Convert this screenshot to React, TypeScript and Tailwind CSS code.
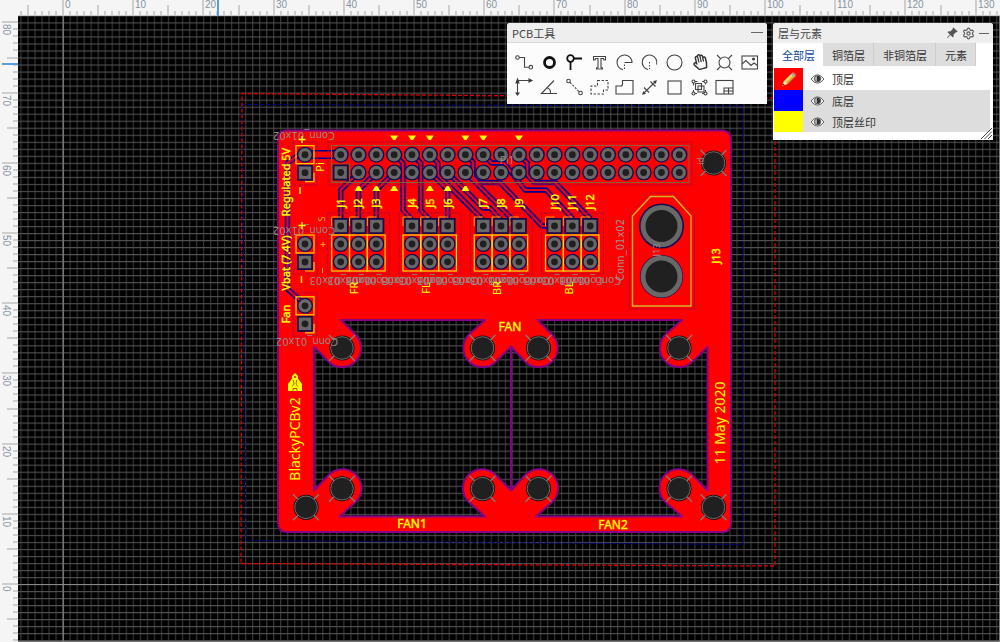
import React, { useEffect, useState } from "react";
import { Settings } from "lucide-react";
import { BsPinAngleFill } from "react-icons/bs";
import { FaRegHandPaper } from "react-icons/fa";

const UNIT = 7.02;
const ORIGIN_X = 63;
const ORIGIN_Y = 584;
const RULER_X = 18;
const RULER_Y = 16;

const range = (from: number, to: number) =>
  Array.from({ length: to - from + 1 }, (_, i) => from + i);

const tickLength = (n: number) => (n % 10 === 0 ? 16 : n % 5 === 0 ? 11 : 5);

function useWindowSize() {
  const read = () => ({ width: window.innerWidth, height: window.innerHeight });
  const [size, setSize] = useState(read);
  useEffect(() => {
    const update = () => setSize(read());
    window.addEventListener("resize", update);
    return () => window.removeEventListener("resize", update);
  }, []);
  return size;
}

function TopRuler() {
  const { width } = useWindowSize();
  return (
    <svg className="block h-full w-full" aria-label="X ruler">
      <g transform={`translate(${-RULER_X} 0)`}>
        {range(-6, Math.floor((width - ORIGIN_X) / UNIT)).map((n) => {
          const x = Math.round(ORIGIN_X + n * UNIT);
          return (
            <g key={n}>
              <rect x={x - 0.5} y={16 - tickLength(n)} width="1" height="16" fill="#a8a8a8" />
              {n % 10 === 0 && (
                <text x={x + 2} y="8" fontSize="10" fill="#8794a3" fontFamily="Liberation Sans, sans-serif">
                  {n}
                </text>
              )}
            </g>
          );
        })}
        <rect x={RULER_X} y="15" width={width} height="1" fill="#c4c8c8" />
        <rect x="217" y="0" width="2" height="16" fill="#5c9be0" />
      </g>
    </svg>
  );
}

function LeftRuler() {
  const { height } = useWindowSize();
  return (
    <svg className="block h-full w-full" aria-label="Y ruler">
      <g transform={`translate(0 ${-RULER_Y})`}>
        {range(-Math.max(0, Math.floor((height - ORIGIN_Y) / UNIT)), 80).map((n) => {
          const y = Math.round(ORIGIN_Y - n * UNIT);
          return (
            <g key={n}>
              <rect x={18 - tickLength(n)} y={y - 0.5} width="16" height="1" fill="#a8a8a8" />
              {n % 10 === 0 && (
                <text
                  transform={`translate(3 ${y + 2}) rotate(90)`}
                  fontSize="10"
                  fill="#8794a3"
                  fontFamily="Liberation Sans, sans-serif"
                >
                  {n}
                </text>
              )}
            </g>
          );
        })}
        <rect x="2" y="63" width="16" height="2" fill="#5c9be0" />
      </g>
    </svg>
  );
}

const col = (i: number) => 340.7 + i * 17.82;

const BOARD =
  "M287 130.5H722Q731 130.5 731 139.5V523Q731 532 722 532H287Q278 532 278 523V139.5Q278 130.5 287 130.5Z";
const LEFT_CUTOUT =
  "M341 320H485L469 334.5A19 19 0 1 0 496 361.5L511 346.5V490.5L496 475.3A19 19 0 1 0 469 502L485 516.5H339.5L355.5 502A19 19 0 1 0 328.5 475.3L314 490.5V346.5L328.5 361.5A19 19 0 1 0 355.5 334.5Z";
const RIGHT_CUTOUT =
  "M537.5 320H682L665.5 334.5A19 19 0 1 0 692.5 361.5L707.5 347V490.5L692.5 475.3A19 19 0 1 0 665.5 502L682 516.5H536L552 502A19 19 0 1 0 525 475.3L511 490.5V346.5L525 361.5A19 19 0 1 0 552 334.5Z";

const TRACES = [
  "M358.5 172.5L340.7 190V226",
  "M376.3 172.5L358.5 190V226",
  "M394.2 172.5L376.3 190V226",
  "M394.2 154.7L403 163V210L412 220",
  "M412 154.7L420.7 163V210L430 220",
  "M430 154.7L438 163V175L483 220",
  "M430 172.5L447.7 190V226",
  "M447.7 172.5L483 208H490L501 220",
  "M465.5 172.5L519 226",
  "M465.5 154.7L473 162V177L478 182.5H500L542 226H554",
  "M483.3 154.7L491.5 163H504L525 190H546L573 219",
  "M519 154.7L527.3 163V175L534 182.5H555L590.5 219",
  "M305 154.7H299L287.5 163V289L305 305",
];

const PADS = [0, 1, 2, 4, 5, 6, 8, 9, 10, 12, 13, 14];
const HOLES = [
  [342, 348], [482.5, 348], [538.5, 348], [679, 348],
  [342, 488.7], [482.5, 488.7], [538.5, 488.7], [679, 488.7],
  [306, 507.3], [713.5, 507.3], [713.5, 163],
];

function Pad({ x, y, square = false }: { x: number; y: number; square?: boolean }) {
  return (
    <g>
      {square ? (
        <>
          <rect x={x - 8} y={y - 8} width="16" height="16" fill="#1b0a48" />
          <rect x={x - 6.2} y={y - 6.2} width="12.4" height="12.4" fill="#686868" />
        </>
      ) : (
        <>
          <circle cx={x} cy={y} r="8" fill="#100850" />
          <circle cx={x} cy={y} r="6.7" fill="#686868" />
        </>
      )}
      <circle cx={x} cy={y} r="3.4" fill="#202020" />
    </g>
  );
}

interface LabelProps {
  x: number;
  y: number;
  text: string;
  angle?: number;
  size?: number;
  fill?: string;
  font?: string;
  bold?: boolean;
}

function Label({ x, y, text, angle = -90, size = 11, fill = "#ff0", font = "Noto Sans, sans-serif", bold = false }: LabelProps) {
  return (
    <text
      transform={`translate(${x} ${y}) rotate(${angle})`}
      y={size * 0.36}
      textAnchor="middle"
      fontSize={size}
      fill={fill}
      stroke={bold ? fill : "none"}
      strokeWidth="0.4"
      fontFamily={font}
    >
      {text}
    </text>
  );
}

function Board() {
  return (
    <g>
      <path d={`${BOARD}${LEFT_CUTOUT}${RIGHT_CUTOUT}`} fill="#f00" fillRule="evenodd" stroke="#850085" strokeWidth="2" strokeLinejoin="round" />

      <g fill="none" strokeLinejoin="round">
        <path d="M305 154.5H340" stroke="#000090" strokeWidth="9" />
        <path d="M305 154.5H340" stroke="#f00" strokeWidth="6" />
        {TRACES.map((d) => <path key={d} d={d} stroke="#000090" strokeWidth="5.4" />)}
        {TRACES.map((d) => <path key={d} d={d} stroke="#f00010" strokeWidth="2.2" />)}
      </g>

      <g fill="none" stroke="#c80028" strokeWidth="1">
        <rect x="328" y="142" width="364" height="43" />
        {[0, 4, 8, 12].map((c) => (
          <rect key={c} x={col(c) - 13} y="213" width="62" height="61" />
        ))}
        {[142, 231, 293].map((y) => <rect key={y} x="293" y={y} width="24" height="43" />)}
        <path d="M629.5 214L649.5 193H674.5L694.5 214V309H629.5Z" />
      </g>
      <rect x="331.5" y="145.5" width="357.5" height="37" fill="none" stroke="#8a5b38" />
      <rect x="332" y="164" width="17.5" height="18" fill="none" stroke="#8a5b20" />

      {range(0, 19).map((i) => (
        <g key={i}>
          <Pad x={col(i)} y={154.7} />
          <Pad x={col(i)} y={172.5} square={i === 0} />
        </g>
      ))}
      {PADS.map((i) => (
        <g key={i}>
          <path d={`M${col(i) - 9} 226V217H${col(i)}`} fill="none" stroke="#ffa000" />
          <Pad x={col(i)} y={226} square />
          <Pad x={col(i)} y={244} />
          <Pad x={col(i)} y={261.8} />
          <rect x={col(i) - 9} y="235" width="17.8" height="36" fill="none" stroke="#ffe000" strokeWidth="1.2" />
        </g>
      ))}
      {[154.7, 244, 305.8].map((y) => (
        <g key={y}>
          <Pad x={305} y={y} />
          <Pad x={305} y={y + 18} square />
          <rect x="296" y={y - 9} width="18" height="18" fill="none" stroke="#ffd800" strokeWidth="1.2" />
          <path d={`M314 ${y + 18}V${y + 27}H305`} fill="none" stroke="#ffd000" strokeWidth="1.2" />
        </g>
      ))}

      <path d="M632.5 216L650.5 196.5H673.5L691 216V306H632.5Z" fill="none" stroke="#d2b428" strokeWidth="1.4" />
      {[226, 276.5].map((y, i) => (
        <g key={y}>
          <circle cx="661.5" cy={y} r={22.6 - i} fill="#170850" />
          <circle cx="661.5" cy={y} r="21" fill="#686868" />
          <circle cx="661.5" cy={y} r="16" fill="#202020" />
        </g>
      ))}

      {HOLES.map(([x, y]) => (
        <g key={`${x}-${y}`}>
          <circle cx={x} cy={y} r="12.5" fill="#120808" />
          <path d={`M${x - 13} ${y - 13}L${x + 13} ${y + 13}M${x + 13} ${y - 13}L${x - 13} ${y + 13}`} stroke="#7c7c7c" strokeWidth="1.3" />
          <circle cx={x} cy={y} r="11.3" fill="#202020" stroke="#6c6c6c" />
        </g>
      ))}

      <g fill="#ff0">
        {[3, 4, 5, 7, 8, 10].map((i) => (
          <path key={i} d={`M${col(i) - 4} 135.5h8l-3 4.5h-2Z`} />
        ))}
        {[1, 2, 3, 5, 6, 7].map((i) => (
          <path key={i} d={`M${col(i) - 4} 191h8l-3 -5h-2Z`} />
        ))}
        <path d="M288 391V384L292 378.5V376L295 373L298 376V378.5L302 384V391Z" />
      </g>
      <path d="M293 391V388.5H297V391M293.3 380L294 384L292 386.5M296.7 380L296 384L298 386.5" fill="none" stroke="#c02000" strokeWidth=".8" />
      <circle cx="295" cy="377" r="1" fill="#f00" />

      <Label x={304} y={136} text="Conn_01x02" angle={180} size={10} fill="#948888" font="DejaVu Sans, sans-serif" />
      <Label x={304} y={231} text="Conn_01x02" angle={180} size={10} fill="#948888" font="DejaVu Sans, sans-serif" />
      <Label x={307} y={342} text="Conn_01x02" angle={180} size={10} fill="#948888" font="DejaVu Sans, sans-serif" />
      {PADS.map((i) => (
        <Label key={i} x={col(i)} y={281} text="Conn_01x03" angle={180} size={10} fill="#948888" font="DejaVu Sans, sans-serif" />
      ))}
      <Label x={620} y={250} text="Conn_01x02" size={10} fill="#a09090" font="DejaVu Sans, sans-serif" />
      <Label x={657} y={250} text="J13" size={9} fill="#948888" />
      <Label x={507} y={160} text="Pi1" angle={0} size={10} fill="#948888" />
      <Label x={701} y={161} text="id" size={8} fill="#948888" />

      {PADS.map((i, n) => (
        <Label key={i} x={col(i)} y={n > 8 ? 202 : 203} text={`J${n + 1}`} bold />
      ))}
      <g stroke="#ff0" strokeWidth="1.4" fill="none">
        <path d="M302 136V143M298.5 139.5H305.5M300 187V194M302 222V229M298.5 225.5H305.5M301.5 276V283" />
        <path d="M323 242V247M320.5 244.5H325.5M322.5 268V273" stroke="#ffa000" strokeWidth="1" />
      </g>
      <Label x={286} y={182} text="Regulated 5V" bold />
      <Label x={286} y={263} text="Vbat (7.4V)" bold />
      <Label x={286} y={314} text="Fan" bold />
      <Label x={320} y={167} text="Pi" />
      <Label x={322} y={219} text="S" size={9} fill="#ffb000" />
      <Label x={354} y={288} text="FR" />
      <Label x={426} y={288} text="FL" />
      <Label x={497} y={288} text="BR" />
      <Label x={569} y={288} text="BL" />
      <Label x={716} y={256} text="J13" bold />
      <Label x={510} y={327} text="FAN" angle={0} size={12} bold />
      <Label x={412} y={524} text="FAN1" angle={0} size={12} bold />
      <Label x={613} y={525} text="FAN2" angle={0} size={12} bold />
      <Label x={295} y={439} text="BlackyPCBv2" size={14} />
      <Label x={720} y={423} text="11 May 2020" size={14} />
    </g>
  );
}

function BoardCanvas() {
  return (
    <svg className="absolute inset-0 h-full w-full" role="img" aria-label="BlackyPCBv2">
      <defs>
        <pattern id="grid" x={ORIGIN_X - 0.5} y={ORIGIN_Y} width={UNIT} height={UNIT} patternUnits="userSpaceOnUse">
          <rect width="1.2" height={UNIT} fill="#363636" />
          <rect width={UNIT} height="1.1" fill="#525252" />
        </pattern>
      </defs>
      <g transform={`translate(${-RULER_X} ${-RULER_Y})`}>
        <rect x="0" y="0" width="4000" height="3000" fill="#000" />
        <rect x="0" y="0" width="4000" height="3000" fill="url(#grid)" />
        <rect x="62.5" y="0" width="1.5" height="3000" fill="#747474" />
        <rect x="0" y="584" width="4000" height="1" fill="#888" />
        <g fill="none" strokeDasharray="4 2">
          <path d="M242 104.5L743 106V544.5L246 540.5Z" stroke="#000088" />
          <path d="M242 93.5L775 98V566L241 563.5Z" stroke="#d80000" strokeWidth="1.3" />
        </g>
        <Board />
      </g>
    </svg>
  );
}

const TOOLS: { name: string; icon: React.ReactNode }[] = [
  { name: "导线", icon: <><circle cx="5.5" cy="7.5" r="1.8" /><path d="M7.3 7.5H12.5V17.2H17" /><circle cx="18.8" cy="17.2" r="1.8" /></> },
  { name: "焊盘", icon: <circle cx="12.5" cy="12.5" r="5" strokeWidth="2.8" stroke="#111" /> },
  { name: "过孔", icon: <g stroke="#111" strokeWidth="1.8"><circle cx="8.5" cy="8.5" r="3.3" /><path d="M12 8.5H20M8.5 12V20" /></g> },
  { name: "文本", icon: <path d="M6.5 6.5H18.5V10H17L16.5 8.5H14V17.5L15.5 18V19H9.5V18L11 17.5V8.5H8.5L8 10H6.5Z" /> },
  { name: "圆弧", icon: <><path d="M11 19.8A7.5 7.5 0 1 1 20 12.5H13" /><path d="M12.5 19V12.5" strokeDasharray="1.5 1.5" /></> },
  { name: "中心圆弧", icon: <><path d="M11 19.5A7.3 7.3 0 1 1 19.5 14.5" /><path d="M12.5 12V19" strokeDasharray="1.5 1.5" /></> },
  { name: "圆", icon: <circle cx="12.5" cy="12.5" r="7.5" /> },
  { name: "拖动", icon: <g transform="rotate(-14 12.5 12.5)"><FaRegHandPaper x={5} y={4} width={15} height={16} fill="#333" stroke="none" /></g> },
  { name: "孔", icon: <><circle cx="12.5" cy="12.5" r="5.5" /><path d="M5 5L8.6 8.6M20 5L16.4 8.6M5 20L8.6 16.4M20 20L16.4 16.4" /></> },
  { name: "图片", icon: <><rect x="5" y="6" width="15.5" height="13" /><path d="M5 14L9 10.5L14 15.5L17 13L20.5 15.5" /><circle cx="16.5" cy="9" r="1" fill="#333" /></> },
  { name: "画布原点", icon: <><path d="M5.5 6V20M5.5 5.5H19" /><path d="M4 8L5.5 4L7 8ZM17 4L20 5.5L17 7ZM4 18H7L5.5 20Z" fill="#222" /></> },
  { name: "量角器", icon: <path d="M17 5.5L4.5 18.5H20M10 12.8Q14 14 13.5 18.5" /> },
  { name: "连接焊盘", icon: <><circle cx="6.5" cy="6" r="1.8" /><circle cx="18.5" cy="18" r="1.8" /><path d="M8 7.5L17 16.5" strokeDasharray="2 1.5" /></> },
  { name: "铺铜", icon: <path d="M10.5 5.5H21V15H16.5V19H4V11H10.5Z" strokeDasharray="2.5 1.5" /> },
  { name: "实心填充", icon: <path d="M10.5 5.5H21V19H4V11H8.5Q10.5 11 10.5 9Z" /> },
  { name: "尺寸", icon: <><path d="M6.5 18.5L18.5 6.5M7 12.5L12 17.5M13.5 6.5L18.5 11.5" /><path d="M5.5 19.5L6.5 16.5L8.5 18.5ZM19.5 5.5L16.5 6.5L18.5 8.5Z" fill="#333" strokeWidth=".6" /></> },
  { name: "矩形", icon: <rect x="6" y="6" width="13" height="13" /> },
  { name: "组合", icon: <><rect x="8.5" y="8.5" width="6" height="6" /><rect x="11" y="11" width="6" height="6" /><path d="M8 6.5H10.5M15 6.5H17M6.5 8V10.5M18.5 8V9.5M6.5 15V17M8 18.5H10M15 18.5H17M18.5 15V17" /><circle cx="6.5" cy="6.5" r="1.5" /><circle cx="18.5" cy="6.5" r="1.5" /><circle cx="6.5" cy="18.5" r="1.5" /><circle cx="18.5" cy="18.5" r="1.5" /></> },
  { name: "拼板", icon: <><rect x="4" y="5.5" width="17" height="13.5" /><path d="M12 19V13H21M12 16H21M16.5 13V19" /></> },
];

function PcbTools() {
  return (
    <section className="w-[260px] overflow-hidden rounded-t-[3px] bg-[#fcfcfc]" aria-label="PCB工具">
      <header className="flex h-5 items-center justify-between border-b border-[#d8d8d8] bg-[#eee] pl-[5px] pr-1">
        <h2 className="text-[11px] leading-4 text-[#444]">PCB工具</h2>
        <button aria-label="最小化" className="flex h-4 w-3 items-center">
          <span className="h-px w-full bg-[#666]" />
        </button>
      </header>
      <div className="grid grid-cols-10 px-[5px] pb-1 pt-[7px]">
        {TOOLS.map((tool) => (
          <button key={tool.name} aria-label={tool.name} className="flex h-[25px] items-center justify-center hover:bg-gray-200">
            <svg width="25" height="25" viewBox="0 0 25 25" fill="none" stroke="#444" strokeWidth="1.1">
              {tool.icon}
            </svg>
          </button>
        ))}
      </div>
    </section>
  );
}

const TABS = ["全部层", "铜箔层", "非铜箔层", "元素"];
const LAYERS = [
  { name: "顶层", swatch: "bg-[#f00]" },
  { name: "底层", swatch: "bg-[#00f]" },
  { name: "顶层丝印", swatch: "bg-[#ff0]" },
];

function Pencil() {
  return (
    <svg width="16" height="16" viewBox="0 0 16 16">
      <path d="M1.5 14.5L3 10L10 3L13.5 6L6.5 13Z" fill="#f5bd3d" stroke="#b87818" strokeWidth=".6" />
      <path d="M3.8 10.8L10.6 4" stroke="#ffe88a" strokeWidth="1.5" />
      <path d="M5.8 12.6L12.6 6" stroke="#d08a20" strokeWidth="1" />
      <path d="M1.5 14.5L3 10L6.5 13Z" fill="#f7dfb4" />
      <path d="M1.5 14.5L2.2 12.5L3.7 13.7Z" fill="#333" />
      <path d="M10 3L11.2 1.8L14.7 5L13.5 6.2Z" fill="#b8b8b8" />
      <path d="M11.2 1.8Q12.3.8 13.8 2.1Q15.7 3.6 14.7 5Z" fill="#e06a66" />
    </svg>
  );
}

function EyeIcon() {
  return (
    <svg width="15" height="12" viewBox="0 0 15 12" fill="none" stroke="#666">
      <path d="M1 6Q4 1.8 7.5 1.8T14 6Q11 10.2 7.5 10.2T1 6Z" fill="#f4f4f4" />
      <circle cx="7.5" cy="5.7" r="3.2" fill="#aaa" />
      <path d="M7.5 3.2A2.5 2.5 0 0 1 7.5 8.2Z" fill="#333" stroke="#333" />
    </svg>
  );
}

function LayersPanel() {
  const [tab, setTab] = useState(0);
  const [active, setActive] = useState(0);
  return (
    <section className="relative w-[220px] overflow-hidden rounded-t-[3px] bg-white pb-2" aria-label="层与元素">
      <header className="flex h-5 items-center bg-[#eee] pl-[5px] pr-1">
        <h2 className="flex-1 text-[11px] leading-4 text-[#444]">层与元素</h2>
        <div className="flex items-center gap-1 text-[#555]">
          <button aria-label="固定"><BsPinAngleFill size={12} /></button>
          <button aria-label="设置"><Settings size={13} strokeWidth={2} /></button>
          <button aria-label="最小化" className="flex h-4 w-2.5 items-center">
            <span className="h-px w-full bg-[#666]" />
          </button>
        </div>
      </header>
      <div role="tablist" className="flex h-[23px] px-px">
        {TABS.map((name, i) => (
          <button
            key={name}
            role="tab"
            aria-selected={tab === i}
            onClick={() => setTab(i)}
            className={
              tab === i
                ? "bg-white px-2 text-[11px] leading-4 text-[#124a99]"
                : "border-r border-[#ccc] bg-[#ddd] pl-[9px] pr-2 text-[11px] leading-4 text-[#333]"
            }
          >
            {name}
          </button>
        ))}
      </div>
      <ul className="mt-[2px] pl-px pr-[3px]">
        {LAYERS.map((layer, i) => (
          <li key={layer.name} className={active === i ? "flex h-[22px] items-center bg-white" : "flex h-[21px] items-center bg-[#ddd]"}>
            <button
              aria-label={`编辑${layer.name}`}
              onClick={() => setActive(i)}
              className={`flex h-full w-[29px] items-center justify-center ${layer.swatch}`}
            >
              {active === i && <Pencil />}
            </button>
            <button aria-label={`显示${layer.name}`} className="ml-[7px]">
              <EyeIcon />
            </button>
            <button onClick={() => setActive(i)} className="ml-[7px] text-[11px] leading-4 text-[#333]">
              {layer.name}
            </button>
          </li>
        ))}
      </ul>
      <svg className="absolute bottom-0 right-0" width="13" height="13" viewBox="0 0 13 13" stroke="#444" aria-hidden="true">
        <path d="M1 12L12 1M4.5 12L12 4.5M8 12L12 8" />
      </svg>
    </section>
  );
}

export default function App() {
  return (
    <div className="grid h-screen grid-cols-[18px_1fr] grid-rows-[16px_1fr] overflow-hidden bg-[#f5f5f5] font-['Noto_Sans_CJK_SC',sans-serif]">
      <div />
      <div className="min-w-0 overflow-hidden"><TopRuler /></div>
      <div className="min-h-0 overflow-hidden"><LeftRuler /></div>
      <main className="relative overflow-hidden border-b border-r border-[#777] bg-black">
        <BoardCanvas />
        <div className="absolute right-1.5 top-[7px] flex items-start gap-1.5">
          <PcbTools />
          <LayersPanel />
        </div>
      </main>
    </div>
  );
}
